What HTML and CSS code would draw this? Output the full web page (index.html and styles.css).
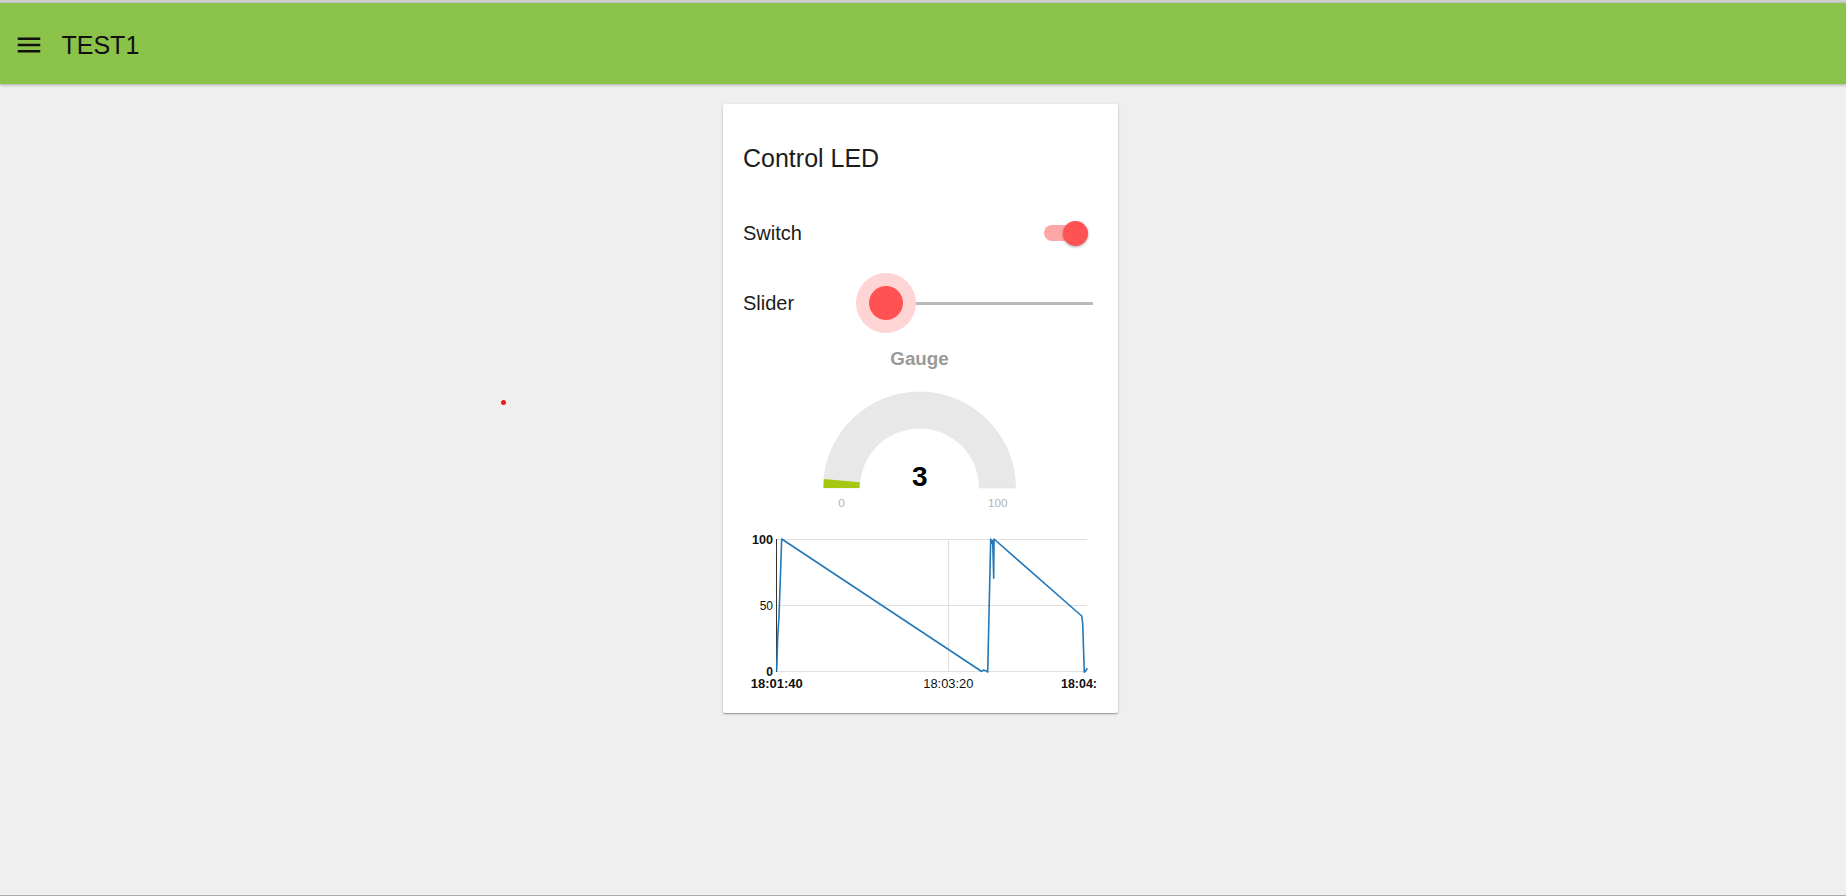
FILE: index.html
```html
<!DOCTYPE html>
<html lang="en">
<head>
<meta charset="utf-8">
<title>TEST1</title>
<link rel="stylesheet" href="styles.css">
</head>
<body>
<div class="page">
  <header class="toolbar">
    <svg class="menu-icon" viewBox="0 0 24 24" width="30" height="30" aria-hidden="true">
      <path d="M3 18h18v-2H3v2zm0-5h18v-2H3v2zm0-7v2h18V6H3z" fill="#111"/>
    </svg>
    <h1 class="toolbar-title">TEST1</h1>
  </header>
  <main class="content">
    <span class="stray-dot"></span>
    <section class="card">
      <div class="card-title">Control LED</div>
      <div class="row row-switch">
        <span class="row-label">Switch</span>
        <div class="switch">
          <span class="switch-track"></span>
          <span class="switch-thumb"></span>
        </div>
      </div>
      <div class="row row-slider">
        <span class="row-label">Slider</span>
        <div class="slider">
          <span class="slider-track"></span>
          <span class="slider-halo"><span class="slider-thumb"></span></span>
        </div>
      </div>
      <svg class="gauge" width="355" height="186" viewBox="0 0 355 186">
        <text class="gauge-title" x="176.5" y="31" text-anchor="middle">Gauge</text>
        <path d="M 80.5 154 A 96 96 0 0 1 272.5 154 L 236.5 154 A 60 60 0 0 0 116.5 154 Z" fill="#e9e8e9" stroke="#e2e1e2" stroke-width="0.6"/>
        <path d="M 80.5 154 A 96 96 0 0 1 80.93 144.97 L 116.77 148.35 A 60 60 0 0 0 116.5 154 Z" fill="#a6c810"/>
        <text class="gauge-value" x="176.8" y="151.7" text-anchor="middle">3</text>
        <text class="gauge-limit" x="98.5" y="173" text-anchor="middle">0</text>
        <text class="gauge-limit" x="254.8" y="173" text-anchor="middle">100</text>
      </svg>
      <svg class="chart" width="355" height="180" viewBox="0 0 355 180">
        <g stroke="#e0e0e0" stroke-width="1">
          <line x1="33.5" y1="19.5" x2="344" y2="19.5"/>
          <line x1="33.5" y1="85.5" x2="344" y2="85.5"/>
          <line x1="33.5" y1="151.5" x2="344" y2="151.5"/>
          <line x1="205.5" y1="19" x2="205.5" y2="151.5"/>
        </g>
        <line x1="33.5" y1="19" x2="33.5" y2="152" stroke="#333" stroke-width="1"/>
        <text class="tick tick-bold" x="30" y="23.5" text-anchor="end" textLength="21" lengthAdjust="spacingAndGlyphs">100</text>
        <text class="tick" x="30" y="89.5" text-anchor="end">50</text>
        <text class="tick tick-bold" x="30" y="155.5" text-anchor="end">0</text>
        <text class="tick tick-bold" x="33.7" y="168.3" text-anchor="middle" textLength="52" lengthAdjust="spacingAndGlyphs">18:01:40</text>
        <text class="tick" x="205.3" y="168.3" text-anchor="middle" textLength="50" lengthAdjust="spacingAndGlyphs">18:03:20</text>
        <text class="tick tick-bold" x="318" y="168.3" text-anchor="start" textLength="36" lengthAdjust="spacingAndGlyphs">18:04:</text>
        <polyline fill="none" stroke="#2378b8" stroke-width="1.6" stroke-linejoin="round"
          points="33.7,151 34.7,116.7 36,96.7 38.7,19 238.7,151.5 240.3,150 242.7,150.7 244.7,152 247.7,19 248.7,23.3 249.7,20.7 250.7,58.3 251,19 338.7,96 339.7,103.3 341.3,152.3 342.7,150.7 344.3,148.3"/>
      </svg>
    </section>
  </main>
</div>
</body>
</html>
```

FILE: styles.css
```css
html, body {
  margin: 0;
  padding: 0;
}

body {
  background: #efefef;
  font-family: "Liberation Sans", Arial, sans-serif;
  color: #1c1c1c;
}

.page {
  height: 100vh;
  box-sizing: border-box;
  border-top: 3px solid #cfcfcf;
  border-bottom: 1px solid #ababab;
  display: flex;
  flex-direction: column;
}

.toolbar {
  flex: none;
  height: 81px;
  box-sizing: border-box;
  padding-top: 2px;
  background: #8bc34a;
  display: flex;
  align-items: center;
  box-shadow: 0 1px 3px rgba(0, 0, 0, 0.3);
  position: relative;
  z-index: 1;
}

.menu-icon {
  margin-left: 13.5px;
  flex: none;
}

.toolbar-title {
  margin: 0 0 0 18px;
  font-size: 25px;
  font-weight: normal;
  line-height: 30px;
  color: #111;
}

.content {
  flex: 1;
  position: relative;
  display: flex;
  justify-content: center;
  align-items: flex-start;
  padding: 20px 5px 0 0;
}

.stray-dot {
  position: absolute;
  left: 501px;
  top: 316px;
  width: 5px;
  height: 5px;
  border-radius: 50%;
  background: #e81c1c;
}

.card {
  width: 395px;
  box-sizing: border-box;
  padding: 0 20px 13px;
  background: #fff;
  border-radius: 2px;
  box-shadow: 0 1px 3px rgba(0, 0, 0, 0.2), 0 1px 1px rgba(0, 0, 0, 0.14), 0 2px 1px -1px rgba(0, 0, 0, 0.12);
  display: flex;
  flex-direction: column;
}

.card-title {
  padding-top: 30px;
  height: 48px;
  line-height: 48px;
  font-size: 25px;
  color: #1c1c1c;
}

.row {
  height: 60px;
  display: flex;
  align-items: center;
}

.row-switch {
  margin-top: 21px;
}

.row-slider {
  margin-top: 10px;
  margin-bottom: 1px;
}

.row-label {
  font-size: 20px;
  line-height: 60px;
  color: #1c1c1c;
}

.switch {
  position: relative;
  width: 44px;
  height: 25px;
  margin-left: auto;
  margin-right: 10px;
}

.switch-track {
  position: absolute;
  left: 0;
  right: 0;
  top: 4.5px;
  height: 16px;
  border-radius: 8px;
  background: #ffa6a6;
}

.switch-thumb {
  position: absolute;
  right: 0;
  top: 0;
  width: 25px;
  height: 25px;
  border-radius: 50%;
  background: #ff5252;
  box-shadow: 0 1px 3px rgba(0, 0, 0, 0.35);
}

.slider {
  position: relative;
  width: 207px;
  height: 60px;
  margin-left: auto;
  margin-right: 5.3px;
  display: flex;
  align-items: center;
}

.slider-track {
  flex: 1;
  height: 3px;
  background: #bababa;
}

.slider-halo {
  position: absolute;
  left: -30px;
  top: 0;
  width: 60px;
  height: 60px;
  border-radius: 50%;
  background: #ffd4d4;
  display: flex;
  align-items: center;
  justify-content: center;
}

.slider-thumb {
  width: 34px;
  height: 34px;
  border-radius: 50%;
  background: #ff5252;
}

.gauge,
.chart {
  display: block;
  flex: none;
}

.gauge-title {
  font-family: "Liberation Sans", Arial, sans-serif;
  font-size: 18.75px;
  font-weight: bold;
  fill: #999;
}

.gauge-value {
  font-family: "Liberation Sans", Arial, sans-serif;
  font-size: 28px;
  font-weight: bold;
  fill: #000;
}

.gauge-limit {
  font-family: "Liberation Sans", Arial, sans-serif;
  font-size: 11.7px;
  fill: #b3b3b3;
}

.tick {
  font-family: "Liberation Sans", Arial, sans-serif;
  font-size: 12px;
  fill: #111;
}

.tick-bold {
  font-weight: bold;
}
```
